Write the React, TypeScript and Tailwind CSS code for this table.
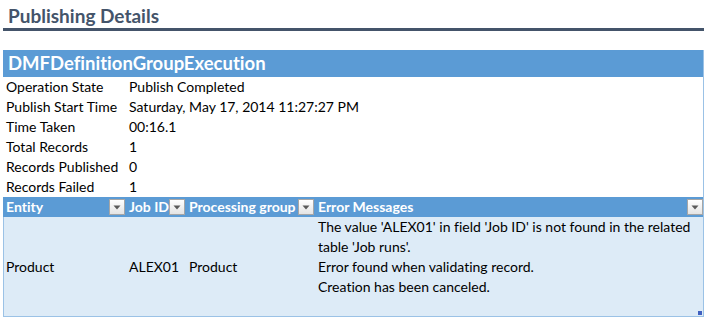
import React from 'react';

const details: [string, string][] = [
  ['Operation State', 'Publish Completed'],
  ['Publish Start Time', 'Saturday, May 17, 2014 11:27:27 PM'],
  ['Time Taken', '00:16.1'],
  ['Total Records', '1'],
  ['Records Published', '0'],
  ['Records Failed', '1'],
];

const columns = [
  { label: 'Entity', width: 'w-[124px]', pad: 'pl-[3px]' },
  { label: 'Job ID', width: 'w-[60px]', pad: 'pl-[2px]' },
  { label: 'Processing group', width: 'w-[129px]', pad: 'pl-[2px]' },
  { label: 'Error Messages', width: 'w-[387px]', pad: 'pl-[2px]' },
];

const FilterButton = () => (
  <span className="flex h-[16px] w-[16px] shrink-0 items-center justify-center border border-[#a6a6a6] bg-gradient-to-b from-white to-[#e4e4e4]">
    <svg width="8" height="5" viewBox="0 0 8 5">
      <path d="M0.5 0.5 L7.5 0.5 L4 4.5 Z" fill="#5a5a5a" />
    </svg>
  </span>
);

export default function App() {
  return (
    <div
      className="h-[323px] w-[708px] overflow-hidden whitespace-nowrap bg-white text-black [font-variant-ligatures:none]"
      style={{ fontFamily: 'Lato, "Open Sans", sans-serif' }}
    >
      {/* Heading */}
      <div className="pl-[8px] pt-[3px] text-[19px] font-bold leading-[25px] text-[#44546a]">Publishing Details</div>
      <div className="ml-[3px] h-[3px] w-[701px] bg-[#44546a]" />

      {/* Table block */}
      <div className="ml-[3px] mt-[19px] w-[701px] border-r border-[#9bc2e6]">
        <div className="flex h-[27px] items-center bg-[#5b9bd5] pl-[5px] text-[18.5px] font-bold text-white">
          DMFDefinitionGroupExecution
        </div>

        <div className="text-[14px] leading-[20px]">
          {details.map(([k, v]) => (
            <div key={k} className="flex h-[20px] items-center">
              <span className="w-[124px] pl-[3px]">{k}</span>
              <span className="pl-[2px]">{v}</span>
            </div>
          ))}
        </div>

        {/* Header row */}
        <div className="flex h-[20px] items-center bg-[#5b9bd5] text-[14px] font-bold text-white">
          {columns.map((c, i) => (
            <div
              key={c.label}
              className={`flex h-[20px] items-center justify-between ${c.width} ${c.pad} ${i === 3 ? 'pr-[0px]' : 'pr-[2px]'}`}
            >
              <span className="leading-[20px]">{c.label}</span>
              <FilterButton />
            </div>
          ))}
        </div>

        {/* Data row */}
        <div className="relative flex h-[100px] border-b border-l border-[#9bc2e6] bg-[#ddebf7] text-[14px] leading-[20px]">
          <div className="flex w-[123px] items-center pl-[2px]">Product</div>
          <div className="flex w-[60px] items-center pl-[2px]">ALEX01</div>
          <div className="flex w-[129px] items-center pl-[2px]">Product</div>
          <div className="w-[387px] pl-[2px]">
            <div>The value 'ALEX01' in field 'Job ID' is not found in the related</div>
            <div>table 'Job runs'.</div>
            <div>Error found when validating record.</div>
            <div>Creation has been canceled.</div>
          </div>
          <span className="absolute bottom-[1px] right-[1px] h-[4px] w-[4px] bg-[#4060c0]" />
        </div>
      </div>
    </div>
  );
}
